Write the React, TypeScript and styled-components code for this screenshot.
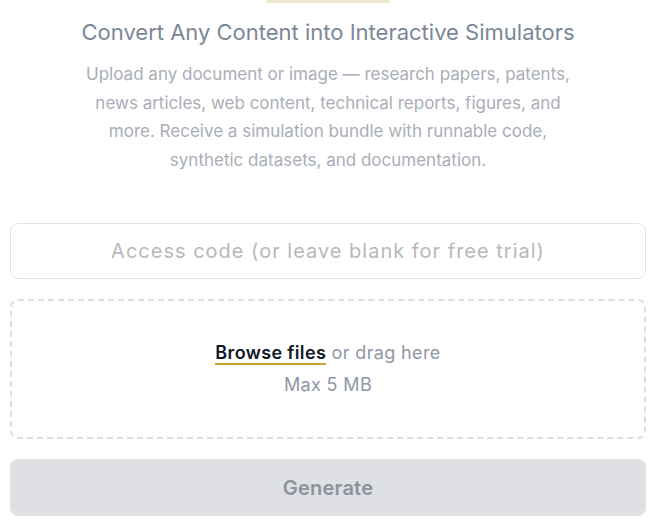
import styled, { createGlobalStyle } from "styled-components";

const GlobalStyle = createGlobalStyle`
  html, body {
    margin: 0;
    padding: 0;
    background: #ffffff;
  }
  body {
    font-family: Inter, "Noto Sans", "Liberation Sans", sans-serif;
  }
  * {
    box-sizing: border-box;
  }
`;

const Page = styled.main`
  display: flex;
  flex-direction: column;
  padding: 0 13px 0 10px;
`;

const Header = styled.header`
  display: flex;
  flex-direction: column;
  align-items: center;
  text-align: center;
`;

const AccentBar = styled.div`
  width: 124px;
  height: 3px;
  background: #efe6d3;
`;

const Title = styled.h1`
  margin: 14px 0 0;
  font-size: 22px;
  line-height: 30px;
  font-weight: 400;
  color: #7c8796;
`;

const Lead = styled.p`
  margin: 13px 0 0;
  max-width: 505px;
  font-size: 17px;
  line-height: 28.5px;
  color: #a9aeb8;
`;

const Form = styled.form`
  display: flex;
  flex-direction: column;
  gap: 20px;
  margin-top: 49px;
`;

const CodeInput = styled.input`
  width: 100%;
  height: 56px;
  padding: 0 16px;
  border: 1px solid #e3e4e6;
  border-radius: 8px;
  font-family: inherit;
  font-size: 20px;
  letter-spacing: 0.05em;
  text-align: center;
  color: #1f2937;
  outline: none;

  &::placeholder {
    color: #b8b8b8;
  }
`;

const DropZone = styled.label`
  display: flex;
  flex-direction: column;
  align-items: center;
  justify-content: center;
  gap: 4px;
  height: 140px;
  border: 2px dashed #dcdee2;
  border-radius: 8px;
  cursor: pointer;
`;

const DropLine = styled.div`
  font-size: 18px;
  line-height: 28px;
  letter-spacing: 0.02em;
  color: #8f98a5;
`;

const BrowseLink = styled.span`
  font-weight: 600;
  color: #111827;
  border-bottom: 2px solid #c9a227;
`;

const GenerateButton = styled.button`
  height: 57px;
  border: none;
  border-radius: 8px;
  background: #dee0e4;
  color: #8a929e;
  font-family: inherit;
  font-size: 20px;
  letter-spacing: 0.01em;
  font-weight: 600;
  cursor: not-allowed;
`;

export default function App() {
  return (
    <>
      <GlobalStyle />
      <Page>
        <Header>
          <AccentBar />
          <Title>Convert Any Content into Interactive Simulators</Title>
          <Lead>
            Upload any document or image — research papers, patents, news
            articles, web content, technical reports, figures, and more.
            Receive a simulation bundle with runnable code, synthetic datasets,
            and documentation.
          </Lead>
        </Header>
        <Form onSubmit={(e) => e.preventDefault()}>
          <CodeInput
            type="text"
            placeholder="Access code (or leave blank for free trial)"
          />
          <DropZone>
            <DropLine>
              <BrowseLink>Browse files</BrowseLink> or drag here
            </DropLine>
            <DropLine>Max 5 MB</DropLine>
          </DropZone>
          <GenerateButton type="submit" disabled>
            Generate
          </GenerateButton>
        </Form>
      </Page>
    </>
  );
}
